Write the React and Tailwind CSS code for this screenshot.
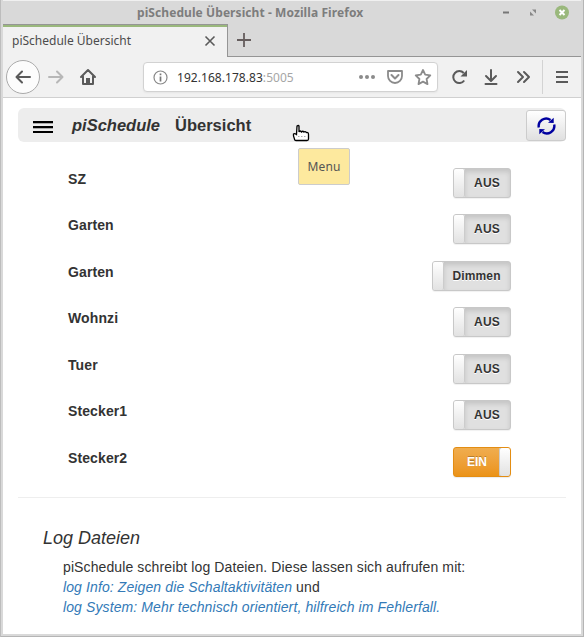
import React from "react";

const switches = [
  { name: "SZ", label: "AUS", row: "h-[46px]" },
  { name: "Garten", label: "AUS", row: "h-[47px]" },
  { name: "Garten", label: "Dimmen", row: "h-[46px]" },
  { name: "Wohnzi", label: "AUS", row: "h-[47px]" },
  { name: "Tuer", label: "AUS", row: "h-[46px]" },
  { name: "Stecker1", label: "AUS", row: "h-[47px]" },
  { name: "Stecker2", label: "EIN", row: "h-[50px]" },
];

function Toggle({ label }) {
  if (label === "EIN") {
    return (
      <div className="flex h-[30px] w-[58px] overflow-hidden rounded-[3px] border border-[#e38d13] bg-linear-to-b from-[#f0ad4e] to-[#eb9316] shadow-[0_1px_1px_rgba(0,0,0,0.08)]">
        <span className="flex-1 pl-px text-center text-[12px] leading-[28px] font-bold text-white [text-shadow:0_-1px_0_rgba(0,0,0,0.25)]">
          EIN
        </span>
        <span className="-my-px -mr-px w-[12px] rounded-[3px] border border-[#ccc] border-r-[#e38d13] bg-linear-to-b from-white to-[#e2e2e2]" />
      </div>
    );
  }
  return (
    <div
      className={`flex h-[30px] overflow-hidden rounded-[3px] border border-[#c8c8c8] bg-[#e0e0e0] shadow-[0_1px_1px_rgba(0,0,0,0.06)] ${label === "Dimmen" ? "w-[79px]" : "w-[58px]"}`}
    >
      <span className="w-[11px] rounded-r-[2px] border-r border-[#ccc] bg-linear-to-b from-white to-[#e2e2e2]" />
      <span className="flex-1 pr-px text-center text-[12px] leading-[28px] font-bold tracking-[0.15px] text-[#333] shadow-[inset_0_3px_5px_rgba(0,0,0,0.125)] [text-shadow:0_1px_0_#fff]">
        {label}
      </span>
    </div>
  );
}

function TitleBar() {
  return (
    <div className="relative flex h-[24px] items-center justify-end border-t border-[#f0f0f0] bg-[#d9d9d9] pr-[12px] font-['Noto_Sans',sans-serif]">
      <div className="absolute top-0 left-[134px] text-[12px] leading-[23px] font-bold tracking-[0.08px] whitespace-nowrap text-[#7d7d7d]">
        piSchedule Übersicht - Mozilla Firefox
      </div>
      <svg className="h-[15px] w-[78px]" viewBox="0 0 78 15">
        <path d="M12 7.500h6" stroke="#777" strokeWidth="2" />
        <path d="M41 4.500h4v4zM39 6.500v4h4z" fill="#888" />
        <circle cx="71" cy="7.500" r="7" fill="#9ab87c" />
        <path d="M68.500 5l5 5m0-5l-5 5" stroke="#fff" strokeWidth="2" />
      </svg>
    </div>
  );
}

function Tabs() {
  return (
    <div className="flex h-[33px] bg-[#d9d9d9] font-['Noto_Sans',sans-serif]">
      <div className="flex w-[225px] items-center justify-between border-t border-r border-[#959595] bg-[#f1f1f1] pr-[11px] shadow-[inset_0_2px_0_#9ab87c]">
        <span className="pl-[9px] text-[12px] text-[#4c4c4c]">piSchedule Übersicht</span>
        <svg className="h-[12px] w-[12px]" viewBox="0 0 12 12">
          <path d="M1.500 1.500l9 9m0-9l-9 9" stroke="#5a5a5a" strokeWidth="1.600" />
        </svg>
      </div>
      <div className="flex flex-1 border-b border-[#959595] pt-[9px] pl-[9px]">
        <svg className="h-[14px] w-[14px]" viewBox="0 0 14 14">
          <path d="M0 7h14M7 0v14" stroke="#655d5d" strokeWidth="1.800" />
        </svg>
      </div>
    </div>
  );
}

function Toolbar() {
  return (
    <div className="flex h-[41px] items-center border-b border-[#d0d0d0] bg-[#f1f1f1] font-['Noto_Sans',sans-serif]">
      <svg className="h-[40px] w-[140px] shrink-0" viewBox="3 57 140 40" fill="none">
        <circle cx="23" cy="77" r="16.500" fill="#fcfcfc" stroke="#aaa" />
        <path d="M30 77H17M22 71.500l-5.500 5.500 5.500 5.500" stroke="#5a5a5a" strokeWidth="2" strokeLinecap="round" strokeLinejoin="round" />
        <path d="M49 77h13M57 71.500l5.500 5.500-5.500 5.500" stroke="#b7b7b7" strokeWidth="2" strokeLinecap="round" strokeLinejoin="round" />
        <path d="M81 77l7-7 7 7M83 76.500v7.500h10v-7.500" stroke="#5a5a5a" strokeWidth="2" strokeLinecap="round" strokeLinejoin="round" />
        <path d="M86 84v-6h4v6z" fill="#5a5a5a" />
      </svg>
      <div className="flex h-[30px] w-[295px] items-center justify-between rounded-[4px] border border-[#d2d2d2] bg-white shadow-[0_1px_2px_rgba(0,0,0,0.05)]">
        <div className="flex items-center">
          <svg className="mr-[9px] ml-[9px] h-[15px] w-[15px]" viewBox="0 0 15 15">
            <circle cx="7.500" cy="7.500" r="6.500" fill="none" stroke="#888" strokeWidth="1.200" />
            <path d="M7.500 6.500v5M7.500 3.500v1.700" stroke="#777" strokeWidth="1.700" />
          </svg>
          <span className="pt-[2px] text-[12px] tracking-[0.05px] text-[#333]">
            192.168.178.83<span className="text-[#a6a6a6]">:5005</span>
          </span>
        </div>
        <svg className="h-[28px] w-[80px]" viewBox="357 63 80 28" fill="none">
          <g fill="#8b8b8b">
            <circle cx="361" cy="77" r="2" />
            <circle cx="367" cy="77" r="2" />
            <circle cx="373" cy="77" r="2" />
          </g>
          <path d="M388 71h14v5a7 7 0 0 1-14 0z" stroke="#8b8b8b" strokeWidth="1.800" strokeLinejoin="round" />
          <path d="M391.500 75l3.500 3.500 3.500-3.500" stroke="#8b8b8b" strokeWidth="2" strokeLinecap="round" strokeLinejoin="round" />
          <path d="M423 70l2.200 4.700 5.100.7-3.700 3.600.9 5.100-4.500-2.500-4.500 2.500.9-5.100-3.700-3.600 5.100-.7z" stroke="#8b8b8b" strokeWidth="1.800" strokeLinejoin="round" />
        </svg>
      </div>
      <svg className="h-[40px] w-[143px] shrink-0" viewBox="438 57 143 40" fill="none" stroke="#5a5a5a" strokeWidth="2">
        <path d="M464.200 80.500a6 6 0 1 1-.5-7.500" />
        <path d="M467 70v6.500h-6.500z" fill="#5a5a5a" stroke="none" />
        <path d="M491 70v10M486 76l5 5 5-5M485.500 84h11" strokeLinecap="round" strokeLinejoin="round" />
        <path d="M518 72l5 5-5 5M524 72l5 5-5 5" strokeLinecap="round" strokeLinejoin="round" />
        <path d="M542.500 60v34" stroke="#d3d3d3" strokeWidth="1" />
        <path d="M556 72h12M556 77h12M556 82h12" />
      </svg>
    </div>
  );
}

function PageHeader() {
  return (
    <div className="relative flex h-[34px] items-center rounded-[6px] bg-[#ededed] pl-[15px] text-[16.5px] font-bold text-[#333]">
      <svg className="mt-[3px] h-[12px] w-[20px]" viewBox="0 0 20 12">
        <path d="M0 2h20v1H0zM0 7h20v1H0z" fill="#aaa" />
        <path d="M0 0h20v2H0zM0 5h20v2H0zM0 10h20v2H0z" fill="#000" />
      </svg>
      <span className="ml-[19px] pt-px italic">piSchedule</span>
      <span className="ml-[15px] pt-px">Übersicht</span>
      <div className="mt-px ml-auto flex h-[31px] w-[40px] items-center justify-center rounded-[3px] border border-[#ccc] bg-linear-to-b from-white to-[#e0e0e0]">
        <svg className="h-[20px] w-[20px]" viewBox="0 0 20 20" fill="none">
          <path d="M2.800 11.500A7.500 7.500 0 0 1 14.500 4M18.200 8.500A7.500 7.500 0 0 1 6.500 16" stroke="#0000a0" strokeWidth="2.400" />
          <path d="M17.700 1.700v5.300l-5.700-.3zM3.300 18.300v-5.300l5.700.3z" fill="#0000a0" />
        </svg>
      </div>
      <svg className="absolute top-[16px] left-[274px] h-[18px] w-[18px]" viewBox="0 0 18 18">
        <path d="M5 2q1.500-1 2 0v6q1-2 2.500 0 1.200-1.500 2.500 0 1.300-1 2.300.5 2.200-.5 2.200 2V15q0 1.500-1.500 1.500H4Q2.500 16.500 2.500 15L1.500 12V10q1-1 3 .5z" fill="#fff" stroke="#000" strokeWidth="1.300" />
        <path d="M6 12.500h9" stroke="#aaa" strokeDasharray="1.500 1.500" />
      </svg>
      <div className="absolute top-[40px] left-[280px] h-[37px] w-[52px] rounded-[2px] border border-[#ccc] bg-[#fde99e] text-center font-['Noto_Sans',sans-serif] text-[12px] leading-[36px] font-normal tracking-[0.1px] text-[#555]">
        Menu
      </div>
    </div>
  );
}

export default function App() {
  return (
    <div className="flex h-[637px] w-[584px] flex-col overflow-hidden bg-[#d9d9d9] font-['Liberation_Sans',Arial,sans-serif] shadow-[inset_1px_0_0_#bdbdbd,inset_-1px_-1px_0_#b5b5b5]">
      <div className="mx-[3px] flex h-[634px] flex-col bg-white">
        <TitleBar />
        <Tabs />
        <Toolbar />
        <main className="px-[15px] pt-[10px] text-[14px] text-[#333]">
          <PageHeader />
          <div className="mt-[26px] pr-[55px] pl-[50px]">
            {switches.map((item, index) => (
              <div key={index} className={`flex justify-between ${item.row}`}>
                <span className="leading-[22px] font-bold tracking-[0.11px]">{item.name}</span>
                <Toggle label={item.label} />
              </div>
            ))}
          </div>
          <hr className="border-[#eee]" />
          <section className="pt-[30px] pl-[25px]">
            <h2 className="text-[18px] leading-[20px] italic">Log Dateien</h2>
            <div className="mt-[9px] pl-[20px] leading-[20px] tracking-[0.11px] whitespace-nowrap">
              <p>piSchedule schreibt log Dateien. Diese lassen sich aufrufen mit:</p>
              <p>
                <a className="text-[#337ab7] italic">log Info: Zeigen die Schaltaktivitäten</a> und
              </p>
              <p>
                <a className="text-[#337ab7] italic">log System: Mehr technisch orientiert, hilfreich im Fehlerfall.</a>
              </p>
            </div>
          </section>
        </main>
      </div>
    </div>
  );
}
